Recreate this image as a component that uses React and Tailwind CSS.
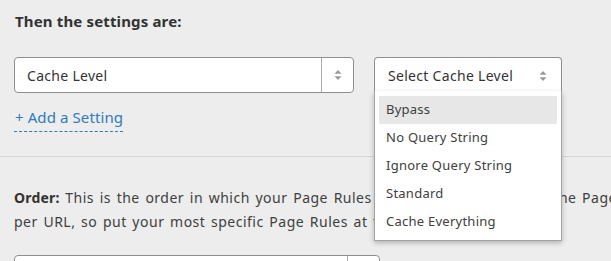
import React from "react";

function Arrows() {
  return (
    <svg width="8" height="12" viewBox="0 0 8 12" className="block">
      <path d="M4 1 L7.5 4.8 L0.5 4.8 Z" fill="#9a9a9a" />
      <path d="M4 11 L7.5 7.2 L0.5 7.2 Z" fill="#9a9a9a" />
    </svg>
  );
}

export default function App() {
  const font = { fontFamily: '"Noto Sans", "Open Sans", sans-serif' };
  const items = ["Bypass", "No Query String", "Ignore Query String", "Standard", "Cache Everything"];
  return (
    <div className="w-[611px] h-[261px] overflow-hidden bg-[#ecedec] text-[#404040]" style={font}>
      <div className="pl-[14px] pt-[10px]">
        <div className="text-[15px] font-bold text-[#333] leading-[22px] pl-px tracking-[0.15px]">Then the settings are:</div>
        <div className="flex gap-[20px] mt-[25px]">
          <div className="w-[340px] h-[36px] bg-white border border-[#8f8f8f] rounded-[4px] flex items-stretch">
            <div className="flex-1 flex items-center pl-[12px] text-[14px] text-[#333] tracking-[0.3px]">Cache Level</div>
            <div className="w-[32px] border-l border-[#a9a9a9] flex items-center justify-center"><Arrows /></div>
          </div>
          <div className="relative w-[188px] h-[36px] bg-white border border-[#8f8f8f] border-b-0 rounded-t-[4px] flex items-center">
            <div className="flex-1 pl-[13px] text-[14px] text-[#333] tracking-[0.3px]">Select Cache Level</div>
            <div className="pr-[14px]"><Arrows /></div>
            <div className="absolute left-[-1px] top-[33px] w-[188px] bg-white border border-[#a3a3a3] border-t-0 shadow-[0_2px_5px_rgba(0,0,0,0.25)] pt-[5px] pb-[4px] px-[4px] z-10">
              {items.map((t, i) => (
                <div key={t} className={"h-[28px] flex items-center pl-[7px] text-[13px] text-[#404040] tracking-[0.25px] " + (i === 0 ? "bg-[#e6e7e6]" : "")}>{t}</div>
              ))}
            </div>
          </div>
        </div>
        <div className="mt-[13px] inline-block text-[15px] text-[#2f7bbf] leading-[22px] pb-[3px] border-b border-dashed border-[#2f7bbf] pl-px tracking-[0.1px]">+ Add a Setting</div>
      </div>
      <div className="mt-[24px] border-t border-[#d5d6d5]"></div>
      <div className="pl-[14px] pt-[29px]">
        <p className="text-[14px] leading-[24px] text-[#404040] whitespace-nowrap tracking-[0.5px] [word-spacing:1.5px]">
          <b className="text-[#333] tracking-[0.2px]">Order:</b> This is the order in which your Page Rules will trigger. Only one of the Page Rules will trigger
          <br />
          per URL, so put your most specific Page Rules at the top of the list.
        </p>
        <div className="mt-[21px] flex">
          <div className="w-[366px] h-[36px] bg-white border border-[#8f8f8f] rounded-[4px] flex">
            <div className="flex-1"></div>
            <div className="w-[32px] border-l border-[#a9a9a9]"></div>
          </div>
        </div>
      </div>
    </div>
  );
}
